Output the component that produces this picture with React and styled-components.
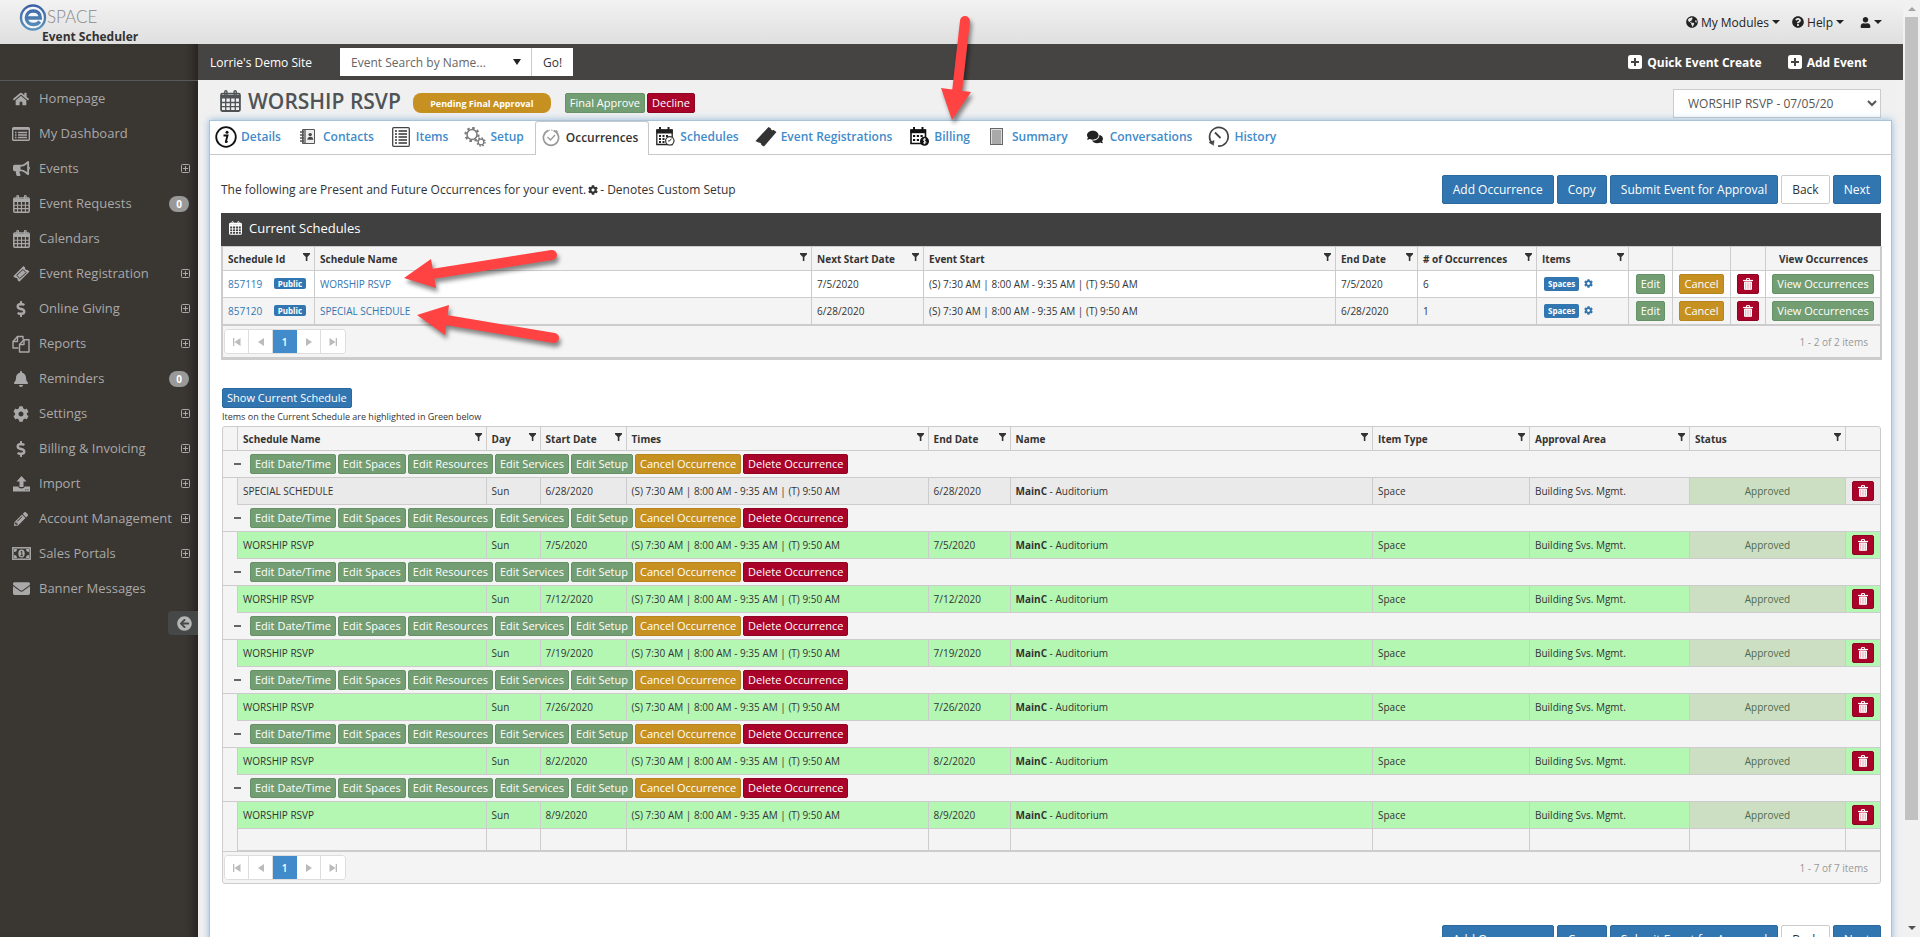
import React from "react";
import styled, { createGlobalStyle, css } from "styled-components";
import {
  FaHome, FaBullhorn, FaDollarSign, FaBell, FaCog,
  FaPencilAlt, FaEnvelope, FaGlobeAmericas, FaQuestionCircle, FaUser,
  FaArrowCircleLeft, FaComments,
} from "react-icons/fa";

const GlobalStyle = createGlobalStyle`
  *, *::before, *::after { box-sizing: border-box; }
  body { margin: 0; font-family: "Open Sans", "Liberation Sans", sans-serif; font-size: 12px; color: #333; background: #f0f0f0; }
  button, input, select { font-family: inherit; margin: 0; }
  a { text-decoration: none; color: inherit; }
`;

/* ---------- icons ---------- */
const CalendarGrid = ({ w = 16, h = 16 }) => (
  <svg width={w} height={h} viewBox="0 0 17 18" fill="none" stroke="currentColor" aria-hidden="true">
    <rect x="0.8" y="3" width="15.4" height="14.2" rx="1" strokeWidth="1.5" />
    <path d="M1 4.5h15v2H1z" fill="currentColor" strokeWidth="1" />
    <path d="M4.6 6.5v10.5M8.5 6.5v10.5M12.4 6.5v10.5M1 10.2h15M1 13.6h15" strokeWidth="1.1" />
    <rect x="3.8" y="0.6" width="1.8" height="4" rx="0.9" strokeWidth="1.1" />
    <rect x="11.4" y="0.6" width="1.8" height="4" rx="0.9" strokeWidth="1.1" />
  </svg>
);
const ListIcon = () => (
  <svg width="18" height="14" viewBox="0 0 18 14" fill="none" stroke="currentColor" aria-hidden="true">
    <rect x="0.7" y="0.7" width="16.6" height="12.6" rx="1" strokeWidth="1.4" />
    <path d="M1 1.800h16" strokeWidth="2" />
    <path d="M3 5.500h1.500M3 8h1.500M3 10.500h1.500M6 5.500h9M6 8h9M6 10.500h9" strokeWidth="1.300" />
  </svg>
);
const TicketIcon = () => (
  <svg width="17" height="16" viewBox="0 0 17 16" aria-hidden="true">
    <path d="M10.500 0l1.600 1.400c-.5 1.500.9 2.900 2.600 2.500L16.500 5.500 6.300 15.800l-1.700-1.500c.5-1.600-1-3-2.600-2.500L.3 10.200z" fill="currentColor" />
    <path d="M10 3.500l3.200 3.200-6.400 5.700-3.100-3.100z" fill="none" stroke="#3a3632" />
  </svg>
);
const FilesIcon = () => (
  <svg width="18" height="18" viewBox="0 0 18 18" fill="none" stroke="currentColor" strokeWidth="1.4" strokeLinejoin="round" aria-hidden="true">
    <path d="M6.500 13H1V6.500L5.500 1.500H11v3" />
    <path d="M5.500 1.500v5H1" />
    <path d="M7.500 17V9.500L12 4.800h5V17z" />
    <path d="M12 4.800v4.700H7.500" />
  </svg>
);
const UploadIcon = () => (
  <svg width="17" height="16" viewBox="0 0 17 16" fill="currentColor" aria-hidden="true">
    <path d="M8.500 0l5 5.600h-3V11h-4V5.600h-3z" />
    <path d="M0 10.500h5.200c.4 1.200 1.600 2 3.300 2s2.900-.8 3.300-2H17V15.500H0zm12.200 2.800v1h1v-1zm2.300 0v1h1v-1z" />
  </svg>
);
const MoneyIcon = () => (
  <svg width="19" height="13" viewBox="0 0 19 13" aria-hidden="true">
    <rect x="0.800" y="0.800" width="17.400" height="11.400" fill="none" stroke="currentColor" strokeWidth="1.500" />
    <path d="M2 2h3a3 3 0 0 1-3 3zM17 2h-3a3 3 0 0 0 3 3zM2 11h3a3 3 0 0 0-3-3zM17 11h-3a3 3 0 0 1 3-3z" fill="currentColor" />
    <ellipse cx="9.500" cy="6.500" rx="3.200" ry="4" fill="currentColor" />
    <path d="M8.600 5l1.200-.8v4.200M8.500 8.600h2.400" stroke="#3a3632" strokeWidth="1" fill="none" />
  </svg>
);
const PlusBox = () => (
  <svg width="9" height="9" viewBox="0 0 9 9" fill="none" stroke="currentColor" aria-hidden="true">
    <rect x="0.500" y="0.500" width="8" height="8" rx="1" />
    <path d="M4.500 2v5M2 4.500h5" />
  </svg>
);
const AddBox = () => (
  <svg width="14" height="14" viewBox="0 0 14 14" aria-hidden="true">
    <rect width="14" height="14" rx="2.500" fill="#fff" />
    <path d="M7 3v8M3 7h8" stroke="#464442" strokeWidth="2" />
  </svg>
);
const TrashIcon = () => (
  <svg width="10" height="12" viewBox="0 0 10 12" fill="none" stroke="#fff" aria-hidden="true">
    <path d="M0 2.500h10" strokeWidth="1.200" />
    <path d="M3.500 2V.6h3V2" />
    <path d="M1.500 4h7v7.300h-7z" fill="#e9b9c4" />
    <path d="M3.800 4v7M6.200 4v7" />
  </svg>
);
const FunnelIcon = () => (
  <svg width="7" height="8" viewBox="0 0 7 8" fill="#333" aria-hidden="true">
    <path d="M0 0h7v1.200L4.400 4v4H2.800V4L0 1.200z" />
  </svg>
);
const PagerArrow = ({ edge, flip }) => (
  <svg width="8" height="8" viewBox="0 0 8 8" fill="#bbb" transform={flip ? "scale(-1 1)" : undefined} aria-hidden="true">
    <path d={edge ? "M0 0h1.300v8H0zM7.500 0v8L1.500 4z" : "M7 0v8L1 4z"} />
  </svg>
);
const TabIcons = {
  details: (
    <svg width="22" height="22" viewBox="0 0 22 22" aria-hidden="true">
      <circle cx="11" cy="11" r="9.800" fill="#fff" stroke="#111" strokeWidth="1.800" />
      <circle cx="12" cy="6.300" r="1.500" fill="#111" />
      <path d="M8.500 9.500h4l-1.700 6.300c0 .6.700.3 1.800-.5" stroke="#111" strokeWidth="1.900" fill="none" />
    </svg>
  ),
  contacts: (
    <svg width="16" height="15" viewBox="0 0 16 15" aria-hidden="true">
      <path d="M2.500.5h12v14h-12z" fill="#eee" stroke="#555" />
      <path d="M3 1h3v13H3z" fill="#888" />
      <path d="M0 3h4M0 6h4M0 9h4M0 12h4" stroke="#555" strokeWidth="1.400" />
      <circle cx="10.200" cy="5.600" r="1.700" fill="#444" />
      <path d="M7.300 10.800c0-4 6-4 6 0z" fill="#444" />
    </svg>
  ),
  items: (
    <svg width="18" height="20" viewBox="0 0 18 20" aria-hidden="true">
      <rect x="0.700" y="0.700" width="16.600" height="18.600" rx="1" fill="#fff" stroke="#444" strokeWidth="1.300" />
      <path d="M3 4h2M3 7h2M3 10h2M3 13h2M3 16h2M6.500 4H15M6.500 7H15M6.500 10H15M6.500 13H15M6.500 16H15" stroke="#333" strokeWidth="1.300" />
    </svg>
  ),
  setup: (
    <svg width="22" height="20" viewBox="0 0 22 20" fill="none" stroke="#777" aria-hidden="true">
      <circle cx="8" cy="7.500" r="5" strokeWidth="1.500" />
      <circle cx="8" cy="7.500" r="6.600" strokeWidth="2" strokeDasharray="2.600 2.580" />
      <circle cx="17" cy="15" r="2.800" strokeWidth="1.200" />
      <circle cx="17" cy="15" r="4" strokeWidth="1.400" strokeDasharray="1.600 1.540" />
    </svg>
  ),
  occurrences: (
    <svg width="18" height="19" viewBox="0 0 18 19" fill="none" stroke="#999" aria-hidden="true">
      <path d="M11.500 2.500a7.600 7.600 0 1 1-5 0" strokeWidth="1.700" />
      <path d="M6.500 2.500a7.600 7.600 0 0 1 5 0" strokeWidth="1" strokeDasharray="1.500 1" />
      <path d="M14 2.500l1.500 1.500" strokeWidth="1.600" />
      <path d="M5.500 9l3 3 4.500-5" strokeWidth="1.300" />
    </svg>
  ),
  schedules: (
    <svg width="19" height="19" viewBox="0 0 19 19" aria-hidden="true">
      <path d="M.8 3h15.400v14.500H.8z" fill="#fff" stroke="#222" strokeWidth="1.300" />
      <path d="M.5 2.500h16v4H.5z" fill="#222" />
      <path d="M4 0v4M12.500 0v4" stroke="#222" strokeWidth="2" />
      <path d="M3 9h2M6.500 9h2M10 9h2M3 12h2M6.500 12h2M3 15h2M6.500 15h2" stroke="#222" strokeWidth="1.800" />
      <circle cx="13.800" cy="13.800" r="4.200" fill="#fff" stroke="#333" strokeWidth="1.200" />
      <path d="M13.500 14l2-2.400M13.500 14h-1.500" stroke="#333" />
    </svg>
  ),
  registrations: (
    <svg width="22" height="20" viewBox="0 0 22 20" aria-hidden="true">
      <path d="M13.500 0l2.200 1.200c.1 1.500 1.500 2.400 2.900 1.900L21.500 5 9 19.500 6.300 18c.1-1.700-1.300-2.800-3-2.400L.5 14z" fill="#333" />
    </svg>
  ),
  billing: (
    <svg width="19" height="19" viewBox="0 0 19 19" aria-hidden="true">
      <path d="M1 3h14.500v13.500H1z" fill="#fff" stroke="#111" strokeWidth="1.600" />
      <path d="M.5 2.500h15.500v3.700H.5z" fill="#111" />
      <path d="M4 0v4M12.500 0v4" stroke="#111" strokeWidth="2" />
      <path d="M3 9h2.200M6.800 9H9M10.500 9h2.200M3 13h2.200M6.800 13H9" stroke="#111" strokeWidth="2.200" />
      <circle cx="14.500" cy="14.200" r="4.500" fill="#111" />
      <path d="M16 12.500c-1-1-3-.6-2.800.5.200 1.200 2.800.8 2.800 2.200-.1 1.200-2 1.300-3 .4M14.600 11.200v6" stroke="#fff" strokeWidth=".9" fill="none" />
    </svg>
  ),
  summary: (
    <svg width="13" height="17" viewBox="0 0 13 17" aria-hidden="true">
      <rect x=".5" y=".5" width="12" height="16" fill="#ddd" stroke="#666" />
      <path d="M2 3h9M2 5h9M2 7h9M2 9h9M2 11h9M2 13h9M2 15h9" stroke="#777" />
    </svg>
  ),
  conversations: <FaComments size={16} color="#222" />,
  history: (
    <svg width="22" height="21" viewBox="0 0 22 21" fill="none" stroke="#444" aria-hidden="true">
      <path d="M4.500 17.500A9.300 9.300 0 1 1 10 20" strokeWidth="1.700" />
      <path d="M1 16.500l4.500 2.800.6-4.800z" fill="#444" strokeWidth=".5" />
      <path d="M7 6.500l5.500 5.500" strokeWidth="1.800" />
    </svg>
  ),
};

/* ---------- frame ---------- */
const Page = styled.div`
  position: relative;
  display: grid;
  grid-template-columns: minmax(0, 1fr) 17px;
  height: 100vh;
  overflow: hidden;
`;
const Site = styled.div`
  display: flex;
  flex-direction: column;
  min-width: 0;
  height: 100vh;
`;
const Header = styled.header`
  flex: none;
  display: flex;
  justify-content: space-between;
  height: 44px;
  padding: 2px 21px 0 19px;
  background: linear-gradient(#f2f2f2, #dfdfdf);
`;
const Brand = styled.a`
  display: flex;
  flex-direction: column;
`;
const LogoRow = styled.span`
  display: flex;
  align-items: center;
  height: 29px;
  font-family: Lato, sans-serif;
  font-weight: 300;
  font-size: 17px;
  color: #888;
`;
const Product = styled.span`
  margin-left: 23px;
  font-weight: 700;
  font-size: 12px;
  line-height: 12px;
  color: #333;
`;
const HeaderLinks = styled.nav`
  display: flex;
  align-items: center;
  gap: 12px;
  color: #222;
  padding-bottom: 2px;
`;
const HeaderLink = styled.a`
  display: flex;
  align-items: center;
  gap: 3px;
  &:last-child { margin-left: 4px; }
`;
const Caret = styled.span`
  border: 4px solid transparent;
  border-top-color: currentColor;
  border-bottom: 0;
`;
const Body = styled.div`
  flex: 1;
  display: flex;
  min-height: 0;
`;
const Sidebar = styled.nav`
  flex: none;
  width: 198px;
  padding-top: 36px;
  background: #3a3632;
  box-shadow: inset -12px 0 10px -8px #25221f;
`;
const Menu = styled.ul`
  list-style: none;
  margin: 0;
  padding: 0;
  border-top: 1px solid #56585a;
`;
const MenuLink = styled.a`
  display: flex;
  align-items: center;
  height: 35px;
  padding: 0 8px 0 11px;
  font-size: 13px;
  color: #a9a9a9;
`;
const MenuIcon = styled.span`
  width: 20px;
  margin-right: 8px;
  display: flex;
  justify-content: center;
`;
const MenuText = styled.span`
  flex: 1;
  white-space: nowrap;
  padding-bottom: 2px;
`;
const Count = styled.span`
  padding: 0 7px;
  margin-right: 1px;
  border-radius: 8px;
  background: #999;
  color: #fff;
  font-weight: 700;
  font-size: 10px;
  line-height: 16px;
`;
const Collapse = styled.button`
  display: flex;
  align-items: center;
  width: 30px;
  height: 24px;
  margin: 5px 0 0 auto;
  padding: 0 0 0 9px;
  border: 0;
  border-radius: 4px 0 0 4px;
  background: #464747;
  color: #b5b5b5;
`;
const Main = styled.main`
  flex: 1;
  display: flex;
  flex-direction: column;
  min-width: 0;
  background: #f0f0f0;
`;
const TopBar = styled.div`
  flex: none;
  display: flex;
  align-items: center;
  height: 36px;
  padding: 0 36px 0 12px;
  background: #464442;
  color: #fff;
`;
const SearchForm = styled.form`
  display: flex;
  height: 28px;
  margin-left: 28px;
  margin-right: auto;
`;
const SearchBox = styled.label`
  position: relative;
  display: flex;
  width: 191px;
  background: #fff;
`;
const SearchInput = styled.input`
  width: 100%;
  padding: 0 28px 0 11px;
  border: 0;
  background: transparent;
  font-size: 12px;
  &::placeholder { color: #666; }
`;
const SearchArrow = styled.span`
  position: absolute;
  right: 10px;
  top: 11px;
  border: 4px solid transparent;
  border-top: 6px solid #222;
  border-bottom: 0;
`;
const GoButton = styled.button`
  width: 42px;
  border: 0;
  border-left: 1px solid #ccc;
  background: #fff;
  color: #333;
  font-size: 12px;
`;
const QuickLink = styled.a`
  display: flex;
  align-items: center;
  gap: 5px;
  margin-left: 26px;
  font-weight: 700;
  font-size: 12px;
`;
const TitleBar = styled.div`
  flex: none;
  display: flex;
  align-items: center;
  height: 40px;
  padding: 2px 22px 0 22px;
`;
const Title = styled.h1`
  margin: 0 12px 0 7px;
  font-weight: 600;
  font-size: 21px;
  line-height: 26px;
  color: #4f5356;
`;
const TitleIcon = styled.span`
  display: flex;
  color: #4f5356;
`;
const StatusPill = styled.span`
  width: 138px;
  height: 20px;
  margin: 4px 14px 0 0;
  border-radius: 8px;
  background: #c79121;
  color: #fff;
  font-weight: 700;
  font-size: 9px;
  line-height: 21px;
  text-align: center;
`;
const TitleActions = styled.div`
  display: flex;
  gap: 2px;
  margin: 4px auto 0 0;
`;
const DateSelect = styled.select`
  width: 208px;
  height: 29px;
  margin-top: 4px;
  padding: 0 4px 0 10px;
  border: 1px solid #ccc;
  border-radius: 0;
  background: #fff;
  color: #555;
  font-size: 12px;
`;
const Panel = styled.section`
  flex: 1 0 auto;
  margin: 0 11px 0 11px;
  border: 1px solid #a9c3d8;
  border-bottom: 0;
  background: #fff;
  box-shadow: 0 0 7px rgba(82, 150, 210, 0.6);
`;
const Tabs = styled.nav`
  display: flex;
  height: 34px;
  border-bottom: 1px solid #c8c8c8;
`;
const TabLink = styled.a`
  display: flex;
  align-items: center;
  gap: 3px;
  height: 33px;
  padding: 0 11px 2px 4px;
  font-weight: 600;
  font-size: 12px;
  color: #428bca;
  ${(p) => p.$active && css`
    height: 34px;
    padding: 0 10px 3px 3px;
    border: 1px solid #c8c8c8;
    border-bottom: 0;
    border-radius: 3px 3px 0 0;
    background: #fff;
    color: #333;
  `}
`;
const TabIcon = styled.span`
  display: flex;
  justify-content: center;
  width: 24px;
`;
const Content = styled.div`
  padding: 20px 10px 0 11px;
`;
const Toolbar = styled.div`
  display: flex;
  align-items: center;
  justify-content: space-between;
`;
const Intro = styled.p`
  display: flex;
  align-items: center;
  gap: 2px;
  margin: 0;
`;
const ButtonRow = styled.div`
  display: flex;
  justify-content: flex-end;
  gap: 3px;
`;
const tones = {
  primary: ["#3276b1", "#2c699d"],
  plain: ["#fff", "#ccc"],
  green: ["#739e73", "#659265"],
  gold: ["#c79121", "#b7851e"],
  red: ["#a90329", "#900323"],
};
const Button = styled.button`
  height: ${(p) => (p.$large ? 29 : 20)}px;
  padding: ${(p) => (p.$large ? "0 10px" : p.$icon ? "0 5px" : "0 4px")};
  border: 1px solid ${(p) => tones[p.$tone][1]};
  border-radius: 2px;
  background: ${(p) => tones[p.$tone][0]};
  color: ${(p) => (p.$tone === "plain" ? "#333" : "#fff")};
  font-size: ${(p) => (p.$large ? 12 : 11)}px;
  line-height: 16px;
  white-space: nowrap;
  vertical-align: middle;
  svg { display: block; }
`;

/* ---------- grids ---------- */
const GridTitle = styled.h2`
  display: flex;
  align-items: center;
  gap: 7px;
  height: 33px;
  margin: 9px 0 0;
  padding: 0 0 3px 8px;
  background: #404040;
  color: #fff;
  font-weight: 400;
  font-size: 13px;
`;
const Grid = styled.div`
  border: 1px solid #ccc;
  background: #f4f4f4;
  ${(p) => p.$framed
    ? css`border-width: 1px 2px 3px; margin-right: -1px;`
    : css`border-radius: 3px; margin-left: 1px;`}
`;
const Table = styled.table`
  width: 100%;
  table-layout: fixed;
  border-collapse: separate;
  border-spacing: 0;
  font-size: 10px;
`;
const Th = styled.th`
  height: 24px;
  padding: 0 4px 0 5px;
  border-right: 1px solid #ccc;
  border-bottom: 1px solid #ccc;
  font-weight: 700;
  text-align: ${(p) => (p.$center ? "center" : "left")};
  white-space: nowrap;
  &:last-child { border-right: 0; }
`;
const HeadCell = styled.span`
  display: flex;
  align-items: center;
  justify-content: space-between;
  svg { margin-bottom: 3px; }
`;
const Td = styled.td`
  height: ${(p) => (p.$blank ? 22 : 27)}px;
  padding: 0 0 1px 5px;
  border-right: 1px solid #ccc;
  border-bottom: 1px solid #ccc;
  white-space: nowrap;
  &:last-child { border-right: 0; }
  ${(p) => p.$center && css`padding: 0 0 1px; text-align: center;`}
`;
const Row = styled.tr`
  background: ${(p) => p.$bg};
`;
const GroupCell = styled.td`
  height: 27px;
  padding: 0 0 0 11px;
  border-bottom: 1px solid #ccc;
`;
const GroupBar = styled.div`
  display: flex;
  align-items: center;
  gap: 2px;
`;
const Toggle = styled.button`
  width: 14px;
  height: 14px;
  padding: 0;
  border: 0;
  background: transparent;
  display: flex;
  align-items: center;
  &::before { content: ""; width: 7px; height: 2px; background: #666; }
`;
const IndentCell = styled.td`
  padding: 0;
  background: #f4f4f4;
  border-right: 1px solid #ccc;
`;
const StatusCell = styled(Td)`
  background: #cddfc3;
  color: #4e6a4e;
`;
const IdLine = styled.span`
  display: flex;
  align-items: center;
  justify-content: space-between;
  padding-right: 8px;
`;
const GridLink = styled.a`
  color: #3276b1;
`;
const Tag = styled.span`
  display: inline-block;
  padding: 0 4px;
  border-radius: 2px;
  background: #3276b1;
  color: #fff;
  font-weight: 700;
  font-size: 8px;
  line-height: ${(p) => (p.$tall ? 14 : 11)}px;
`;
const ItemsLine = styled.span`
  display: flex;
  align-items: center;
  gap: 5px;
  padding-left: 2px;
  color: #3276b1;
`;
const PagerBar = styled.div`
  display: flex;
  align-items: center;
  justify-content: space-between;
  height: 32px;
  padding: 0 12px 0 1px;
  border-top: 1px solid #ccc;
  color: #999;
  font-size: 10px;
`;
const PagerButtons = styled.div`
  display: flex;
  height: 25px;
  border: 1px solid #ddd;
  border-radius: 4px;
  overflow: hidden;
`;
const PagerButton = styled.button`
  display: flex;
  align-items: center;
  justify-content: center;
  width: 24px;
  padding: 0;
  border: 0;
  border-right: 1px solid #ddd;
  background: #fff;
  font-size: 10px;
  &:last-child { border-right: 0; }
  ${(p) => p.$current && css`background: #428bca; border-color: #428bca; color: #fff; font-weight: 600;`}
`;
const ShowRow = styled.div`
  margin: 28px 0 0 1px;
`;
const Note = styled.p`
  margin: 0 0 0 1px;
  font-size: 9px;
  line-height: 18px;
`;
const FooterRow = styled(ButtonRow)`
  margin-top: 41px;
`;

/* ---------- page scroll bar and annotation arrows ---------- */
const ScrollTrack = styled.div`
  display: flex;
  flex-direction: column;
  align-items: center;
  height: 100vh;
  padding: 7px 2px;
  background: #f1f1f1;
`;
const ScrollArrow = styled.span`
  border: 4px solid transparent;
  ${(p) => (p.$down
    ? css`border-top-color: #505050; border-bottom: 0;`
    : css`border-bottom-color: #a3a3a3; border-top: 0;`)}
`;
const ScrollThumb = styled.div`
  width: 100%;
  margin: 6px 0 auto;
  height: 87%;
  background: #c1c1c1;
`;
const Annotations = styled.svg`
  position: absolute;
  left: 0;
  top: 0;
  pointer-events: none;
  filter: drop-shadow(2px 4px 2px rgba(0, 0, 0, 0.45));
`;

const menu = [
  ["Homepage", <FaHome size={16} />],
  ["My Dashboard", <ListIcon />],
  ["Events", <FaBullhorn size={17} />, "plus"],
  ["Event Requests", <CalendarGrid w={17} h={18} />, "count"],
  ["Calendars", <CalendarGrid w={17} h={18} />],
  ["Event Registration", <TicketIcon />, "plus"],
  ["Online Giving", <FaDollarSign size={16} />, "plus"],
  ["Reports", <FilesIcon />, "plus"],
  ["Reminders", <FaBell size={16} />, "count"],
  ["Settings", <FaCog size={16} />, "plus"],
  ["Billing & Invoicing", <FaDollarSign size={16} />, "plus"],
  ["Import", <UploadIcon />, "plus"],
  ["Account Management", <FaPencilAlt size={14} />, "plus"],
  ["Sales Portals", <MoneyIcon />, "plus"],
  ["Banner Messages", <FaEnvelope size={17} />],
];
const tabs = [
  ["Details", "details"], ["Contacts", "contacts"], ["Items", "items"], ["Setup", "setup"],
  ["Occurrences", "occurrences"], ["Schedules", "schedules"], ["Event Registrations", "registrations"],
  ["Billing", "billing"], ["Summary", "summary"], ["Conversations", "conversations"], ["History", "history"],
];
const TIMES = "(S) 7:30 AM | 8:00 AM - 9:35 AM | (T) 9:50 AM";
const schedules = [
  { id: "857119", name: "WORSHIP RSVP", date: "7/5/2020", count: 6, bg: "#fff" },
  { id: "857120", name: "SPECIAL SCHEDULE", date: "6/28/2020", count: 1, bg: "#f4f4f4" },
];
const occurrences = ["6/28/2020", "7/5/2020", "7/12/2020", "7/19/2020", "7/26/2020", "8/2/2020", "8/9/2020"];
const groupActions = [
  ["Edit Date/Time", "green"], ["Edit Spaces", "green"], ["Edit Resources", "green"], ["Edit Services", "green"],
  ["Edit Setup", "green"], ["Cancel Occurrence", "gold"], ["Delete Occurrence", "red"],
];

const Cols = ({ widths }) => (
  <colgroup>{widths.map((w, i) => <col key={i} width={w} />)}</colgroup>
);
const FilterHead = ({ children }) => (
  <Th scope="col"><HeadCell>{children}<FunnelIcon /></HeadCell></Th>
);
const DeleteButton = () => (
  <Button type="button" $tone="red" $icon aria-label="Delete"><TrashIcon /></Button>
);
const PageActions = () => (
  <>
    <Button type="button" $large $tone="primary">Add Occurrence</Button>
    <Button type="button" $large $tone="primary">Copy</Button>
    <Button type="button" $large $tone="primary">Submit Event for Approval</Button>
    <Button type="button" $large $tone="plain">Back</Button>
    <Button type="button" $large $tone="primary">Next</Button>
  </>
);
const Pager = ({ summary }) => (
  <PagerBar>
    <PagerButtons>
      <PagerButton type="button" aria-label="First page"><PagerArrow edge /></PagerButton>
      <PagerButton type="button" aria-label="Previous page"><PagerArrow /></PagerButton>
      <PagerButton type="button" $current>1</PagerButton>
      <PagerButton type="button" aria-label="Next page"><PagerArrow flip /></PagerButton>
      <PagerButton type="button" aria-label="Last page"><PagerArrow edge flip /></PagerButton>
    </PagerButtons>
    <span>{summary}</span>
  </PagerBar>
);

const ScheduleGrid = () => (
  <Grid $framed>
    <Table>
      <Cols widths={["92", "30%", "112", undefined, "82", "119", "92", "44", "58", "35", "114"]} />
      <thead>
        <tr>
          {["Schedule Id", "Schedule Name", "Next Start Date", "Event Start", "End Date", "# of Occurrences", "Items"].map((h) => (
            <FilterHead key={h}>{h}</FilterHead>
          ))}
          <Th as="td" /><Th as="td" /><Th as="td" />
          <Th scope="col" $center>View Occurrences</Th>
        </tr>
      </thead>
      <tbody>
        {schedules.map((s) => (
          <Row key={s.id} $bg={s.bg}>
            <Td><IdLine><GridLink href="#">{s.id}</GridLink><Tag>Public</Tag></IdLine></Td>
            <Td><GridLink href="#">{s.name}</GridLink></Td>
            <Td>{s.date}</Td>
            <Td>{TIMES}</Td>
            <Td>{s.date}</Td>
            <Td>{s.count}</Td>
            <Td><ItemsLine><Tag $tall>Spaces</Tag><FaCog size={9} /></ItemsLine></Td>
            <Td $center><Button type="button" $tone="green">Edit</Button></Td>
            <Td $center><Button type="button" $tone="gold">Cancel</Button></Td>
            <Td $center><DeleteButton /></Td>
            <Td $center><Button type="button" $tone="green">View Occurrences</Button></Td>
          </Row>
        ))}
      </tbody>
    </Table>
    <Pager summary="1 - 2 of 2 items" />
  </Grid>
);

const OccurrenceGrid = () => (
  <Grid>
    <Table>
      <Cols widths={["15", "15%", "54", "86", "302", "82", undefined, "157", "160", "156", "34"]} />
      <thead>
        <tr>
          <Th as="td" />
          {["Schedule Name", "Day", "Start Date", "Times", "End Date", "Name", "Item Type", "Approval Area", "Status"].map((h) => (
            <FilterHead key={h}>{h}</FilterHead>
          ))}
          <Th as="td" />
        </tr>
      </thead>
      <tbody>
        {occurrences.map((date, i) => (
          <React.Fragment key={date}>
            <tr>
              <GroupCell colSpan={11}>
                <GroupBar>
                  <Toggle type="button" aria-label="Collapse group" />
                  {groupActions.map(([label, tone]) => (
                    <Button key={label} type="button" $tone={tone}>{label}</Button>
                  ))}
                </GroupBar>
              </GroupCell>
            </tr>
            <Row $bg={i === 0 ? "#eaeaea" : "#b3f7b3"}>
              <IndentCell />
              <Td>{i === 0 ? "SPECIAL SCHEDULE" : "WORSHIP RSVP"}</Td>
              <Td>Sun</Td>
              <Td>{date}</Td>
              <Td>{TIMES}</Td>
              <Td>{date}</Td>
              <Td><b>MainC</b> - Auditorium</Td>
              <Td>Space</Td>
              <Td>Building Svs. Mgmt.</Td>
              <StatusCell $center>Approved</StatusCell>
              <Td $center><DeleteButton /></Td>
            </Row>
          </React.Fragment>
        ))}
        <tr>
          <IndentCell />
          {Array.from({ length: 10 }, (_, i) => <Td key={i} $blank />)}
        </tr>
      </tbody>
    </Table>
    <Pager summary="1 - 7 of 7 items" />
  </Grid>
);

export default function App() {
  return (
    <>
      <GlobalStyle />
      <Page>
        <Site>
          <Header>
            <Brand href="#">
              <LogoRow>
                <svg width="28" height="28" viewBox="0 0 28 28" aria-hidden="true">
                  <defs>
                    <linearGradient id="ring" gradientUnits="userSpaceOnUse" x1="0" y1="2" x2="0" y2="26">
                      <stop offset="0" stopColor="#3a5fa5" />
                      <stop offset="1" stopColor="#5b93bb" />
                    </linearGradient>
                  </defs>
                  <circle cx="14" cy="14.500" r="12" fill="#f4f6f8" stroke="url(#ring)" strokeWidth="2.400" />
                  <path d="M6.500 15h14.800c0-4.500-3-7-7-7s-7 2.800-7 6.800 3 6.700 7.200 6.700c2.800 0 4.800-1 6.300-2.900" fill="none" stroke="url(#ring)" strokeWidth="3.400" />
                </svg>
                SPACE
              </LogoRow>
              <Product>Event Scheduler</Product>
            </Brand>
            <HeaderLinks>
              <HeaderLink href="#"><FaGlobeAmericas size={12} />My Modules<Caret /></HeaderLink>
              <HeaderLink href="#"><FaQuestionCircle size={12} />Help<Caret /></HeaderLink>
              <HeaderLink href="#" aria-label="Account"><FaUser size={11} /><Caret /></HeaderLink>
            </HeaderLinks>
          </Header>
          <Body>
            <Sidebar>
              <Menu>
                {menu.map(([label, icon, extra]) => (
                  <li key={label}>
                    <MenuLink href="#">
                      <MenuIcon>{icon}</MenuIcon>
                      <MenuText>{label}</MenuText>
                      {extra === "plus" && <PlusBox />}
                      {extra === "count" && <Count>0</Count>}
                    </MenuLink>
                  </li>
                ))}
              </Menu>
              <Collapse type="button" aria-label="Collapse menu"><FaArrowCircleLeft size={15} /></Collapse>
            </Sidebar>
            <Main>
              <TopBar>
                <span>Lorrie's Demo Site</span>
                <SearchForm>
                  <SearchBox>
                    <SearchInput type="text" placeholder="Event Search by Name..." aria-label="Event Search by Name" />
                    <SearchArrow />
                  </SearchBox>
                  <GoButton type="button">Go!</GoButton>
                </SearchForm>
                <QuickLink href="#"><AddBox />Quick Event Create</QuickLink>
                <QuickLink href="#"><AddBox />Add Event</QuickLink>
              </TopBar>
              <TitleBar>
                <TitleIcon><CalendarGrid w={21} h={22} /></TitleIcon>
                <Title>WORSHIP RSVP</Title>
                <StatusPill>Pending Final Approval</StatusPill>
                <TitleActions>
                  <Button type="button" $tone="green">Final Approve</Button>
                  <Button type="button" $tone="red">Decline</Button>
                </TitleActions>
                <DateSelect aria-label="Occurrence" defaultValue="a">
                  <option value="a">WORSHIP RSVP - 07/05/20</option>
                </DateSelect>
              </TitleBar>
              <Panel>
                <Tabs>
                  {tabs.map(([label, icon]) => (
                    <TabLink key={label} href="#" $active={label === "Occurrences"}>
                      <TabIcon>{TabIcons[icon]}</TabIcon>{label}
                    </TabLink>
                  ))}
                </Tabs>
                <Content>
                  <Toolbar>
                    <Intro>
                      The following are Present and Future Occurrences for your event.
                      <FaCog size={10} />
                      - Denotes Custom Setup
                    </Intro>
                    <ButtonRow><PageActions /></ButtonRow>
                  </Toolbar>
                  <GridTitle><CalendarGrid w={13} h={14} />Current Schedules</GridTitle>
                  <ScheduleGrid />
                  <ShowRow><Button type="button" $tone="primary">Show Current Schedule</Button></ShowRow>
                  <Note>Items on the Current Schedule are highlighted in Green below</Note>
                  <OccurrenceGrid />
                  <FooterRow><PageActions /></FooterRow>
                </Content>
              </Panel>
            </Main>
          </Body>
        </Site>
        <ScrollTrack>
          <ScrollArrow />
          <ScrollThumb />
          <ScrollArrow $down />
        </ScrollTrack>
        <Annotations width="1000" height="400" viewBox="0 0 1000 400" fill="#ff4343" stroke="#ff4343" strokeLinecap="round" aria-hidden="true">
          <path d="M965 21L957 92M552 255L432 274M554 338L446 320" strokeWidth="10" />
          <path d="M941 88L971 92L952 120zM431 259L436 288L404 278zM449 305L445 335L417 315z" stroke="none" />
        </Annotations>
      </Page>
    </>
  );
}
